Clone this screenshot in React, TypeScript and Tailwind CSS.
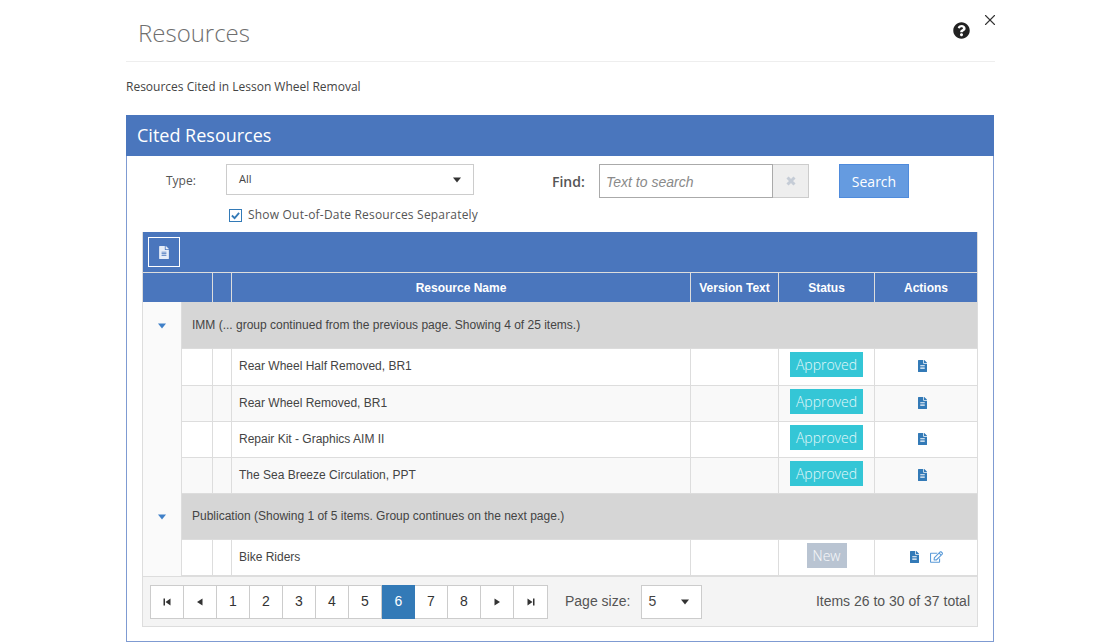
import { FaFileAlt, FaQuestionCircle, FaRegEdit } from 'react-icons/fa';
import { X } from 'lucide-react';

const openSans = "font-['Open_Sans',sans-serif]";

const rows1 = [
    'Rear Wheel Half Removed, BR1',
    'Rear Wheel Removed, BR1',
    'Repair Kit - Graphics AIM II',
    'The Sea Breeze Circulation, PPT',
];

function Caret({ className }: { className: string }) {
    return (
        <svg viewBox="0 0 10 6" className={className}>
            <path d="M0 0h10L5 6z" fill="currentColor" />
        </svg>
    );
}

function GroupRow({ text, height, pad }: { text: string; height: string; pad: string }) {
    return (
        <tr>
            <td className={`${height} bg-[#fafafa] pl-[15px] align-middle border-r border-[#dddddd]`}>
                <Caret className="w-[8px] h-[6px] text-[#3f80c8]" />
            </td>
            <td colSpan={6} className={`${pad} bg-[#d6d6d6] pl-[10px] border-b border-[#dcdcdc] text-[12px] text-[#444444] align-middle`}>
                {text}
            </td>
        </tr>
    );
}

function DataRow({ name, alt, height, isNew, badgePad = 'pb-[4px]' }: { name: string; alt?: boolean; height: string; isNew?: boolean; badgePad?: string }) {
    const bg = alt ? 'bg-[#f9f9f9]' : 'bg-white';
    const cell = `border-b border-r border-[#dddddd] ${bg}`;
    return (
        <tr className="text-[12px] text-[#444444]">
            <td className={`${height} bg-[#fafafa] border-r border-[#dddddd]`} />
            <td className={cell} />
            <td className={cell} />
            <td className={`${cell} pl-[7px] pb-[2px]`}>{name}</td>
            <td className={cell} />
            <td className={`${cell} text-center ${badgePad}`}>
                {isNew ? (
                    <span className={`inline-block w-[40px] h-[25px] leading-[25px] bg-[#b9c4d2] text-white/90 text-[14px] font-light ${openSans}`}>New</span>
                ) : (
                    <span className={`inline-block w-[73px] h-[25px] leading-[25px] bg-[#34c6d6] text-[#e3f8fa] text-[14px] font-light ${openSans}`}>Approved</span>
                )}
            </td>
            <td className={`${bg} border-b border-[#dddddd] pb-[2px]`}>
                {isNew ? (
                    <div className="flex justify-center items-center gap-[10px]">
                        <FaFileAlt className="text-[#337ab7] w-[11px] h-[12px]" />
                        <FaRegEdit className="text-[#5b9bd8] w-[13px] h-[12px]" />
                    </div>
                ) : (
                    <div className="flex justify-center pr-[7px]">
                        <FaFileAlt className="text-[#337ab7] w-[11px] h-[12px]" />
                    </div>
                )}
            </td>
        </tr>
    );
}

function PagerIcon({ d }: { d: string }) {
    return (
        <svg viewBox="0 0 8 8" width={8} height={8} className="text-[#333333]">
            <path d={d} fill="currentColor" />
        </svg>
    );
}

function Pager() {
    const btn = 'w-[33px] h-full flex items-center justify-center border-r border-[#cccccc] last:border-r-0 text-[14px] text-[#333333]';
    return (
        <div className="flex h-[34px] w-[398px] border border-[#cccccc] bg-white">
            <div className={btn}><PagerIcon d="M.5.5H2v7H.5zM7.5.5v7L2.5 4z" /></div>
            <div className={btn}><PagerIcon d="M6.5.5v7L1 4z" /></div>
            {[1, 2, 3, 4, 5].map((n) => (
                <div key={n} className={btn}>{n}</div>
            ))}
            <div className="w-[33px] h-[34px] -my-px flex items-center justify-center bg-[#337ab7] text-white text-[14px]">6</div>
            {[7, 8].map((n) => (
                <div key={n} className={btn}>{n}</div>
            ))}
            <div className={btn}><PagerIcon d="M1.5.5v7L7 4z" /></div>
            <div className={btn}><PagerIcon d="M.5.5v7L5.5 4zM6 .5h1.5v7H6z" /></div>
        </div>
    );
}

export default function App() {
    return (
        <div className="w-[1120px] h-[644px] bg-white overflow-hidden relative font-['Liberation_Sans',sans-serif]">
            <X className="absolute left-[981px] top-[11px] w-[18px] h-[18px] text-[#333333]" strokeWidth={1.5} />

            <div className="pl-[126px] w-[995px]">
                <div className="h-[62px] border-b border-[#eeeeee] flex items-center justify-between pl-[12px] pr-[25px]">
                    <h1 className={`${openSans} font-light text-[24px] text-[#6f6f6f] mt-[4px]`}>Resources</h1>
                    <FaQuestionCircle className="w-[17px] h-[17px] text-[#222222] -mt-[1px]" />
                </div>

                <p className={`${openSans} text-[12px] text-[#444444] mt-[16px] leading-[18px]`}>Resources Cited in Lesson Wheel Removal</p>

                <div className="mt-[19px] w-[868px] h-[527px] border border-[#7f9bd2] border-t-0">
                    <div className="bg-[#4a76bd] h-[41px] -mx-px flex items-center pl-[11px]">
                        <h2 className={`${openSans} font-medium text-[18px] text-white`}>Cited Resources</h2>
                    </div>

                    <div className="flex items-start pt-[8px] h-[42px]">
                        <label className={`${openSans} w-[60px] ml-[39px] text-[12px] font-medium text-[#555555] leading-[34px]`}>Type:</label>
                        <div className="w-[248px] h-[31px] border border-[#cccccc] flex items-center justify-between pl-[12px] pr-[12px] text-[#444444]">
                            <span className={`${openSans} text-[11px] -mt-[1px]`}>All</span>
                            <Caret className="w-[8px] h-[6px] text-[#333333]" />
                        </div>
                        <label className={`${openSans} ml-[78px] w-[47px] text-[14px] font-semibold text-[#555555] leading-[36px]`}>Find:</label>
                        <div className="w-[174px] h-[34px] border border-[#aaaaaa] flex items-center pl-[6px] pt-[2px] text-[14px] italic text-[#8a8a8a]">Text to search</div>
                        <div className="w-[36px] h-[34px] border border-l-0 border-[#cccccc] bg-[#eeeeee] flex items-center justify-center">
                            <svg viewBox="0 0 10 10" className="w-[10px] h-[10px] text-[#c5ccd6]">
                                <path d="M1.5 1.5l7 7M8.5 1.5l-7 7" fill="none" stroke="currentColor" strokeWidth="3" />
                            </svg>
                        </div>
                        <button className={`${openSans} ml-[30px] w-[70px] h-[34px] bg-[#659be0] border border-[#4f8bdc] text-white text-[14px]`}>Search</button>
                    </div>

                    <div className="flex items-center h-[34px] pl-[102px]">
                        <span className="w-[13px] h-[13px] border border-[#337ab7] flex items-center justify-center text-[#337ab7]">
                            <svg viewBox="0 0 10 10" className="w-[9px] h-[9px]">
                                <path d="M1 5l3 3 5-6" fill="none" stroke="currentColor" strokeWidth="2" />
                            </svg>
                        </span>
                        <span className={`${openSans} ml-[6px] text-[12px] text-[#555555] tracking-[0.2px]`}>Show Out-of-Date Resources Separately</span>
                    </div>

                    <div className="ml-[15px] w-[836px] border border-[#dddddd] border-t-0">
                        <div className="bg-[#4a76bd] h-[41px] pl-[5px] pt-[5px] border-b border-[#dddddd]">
                            <div className="w-[32px] h-[30px] border border-white flex items-center justify-center">
                                <FaFileAlt className="w-[12px] h-[13px] text-[#e6edf8]" />
                            </div>
                        </div>
                        <table className="w-[834px] table-fixed border-separate border-spacing-0">
                            <colgroup>
                                <col className="w-[39px]" />
                                <col className="w-[31px]" />
                                <col className="w-[19px]" />
                                <col className="w-[459px]" />
                                <col className="w-[88px]" />
                                <col className="w-[96px]" />
                                <col className="w-[102px]" />
                            </colgroup>
                            <thead>
                                <tr className="bg-[#4a76bd] text-white text-[12px] font-bold">
                                    <th colSpan={2} className="h-[29px] border-r border-[#dddddd]" />
                                    <th className="border-r border-[#dddddd]" />
                                    <th className="border-r border-[#dddddd]">Resource Name</th>
                                    <th className="border-r border-[#dddddd]">Version Text</th>
                                    <th className="border-r border-[#dddddd]">Status</th>
                                    <th>Actions</th>
                                </tr>
                            </thead>
                            <tbody>
                                <GroupRow height="h-[47px]" pad="pb-[0px]" text="IMM (... group continued from the previous page. Showing 4 of 25 items.)" />
                                {rows1.map((name, i) => (
                                    <DataRow
                                        key={name}
                                        name={name}
                                        alt={i % 2 === 1}
                                        height={i === 0 ? 'h-[37px]' : 'h-[36px]'}
                                        badgePad={i === 0 ? 'pb-[6px]' : 'pb-[4px]'}
                                    />
                                ))}
                                <GroupRow height="h-[46px]" pad="pb-[2px]" text="Publication (Showing 1 of 5 items. Group continues on the next page.)" />
                                <DataRow name="Bike Riders" height="h-[36px]" isNew />
                            </tbody>
                        </table>
                        <div className="h-[50px] bg-[#f4f4f4] border-t border-[#dddddd] flex items-center pl-[7px] pr-[7px] text-[#555555]">
                            <Pager />
                            <span className="ml-[17px] text-[14px]">Page size:</span>
                            <div className="ml-[11px] w-[61px] h-[34px] bg-white border border-[#cccccc] flex items-center justify-between pl-[6px] pr-[12px] text-[14px] text-[#444444]">
                                5
                                <Caret className="w-[8px] h-[6px] text-[#333333]" />
                            </div>
                            <span className="ml-auto text-[14px]">Items 26 to 30 of 37 total</span>
                        </div>
                    </div>
                </div>
            </div>
        </div>
    );
}
